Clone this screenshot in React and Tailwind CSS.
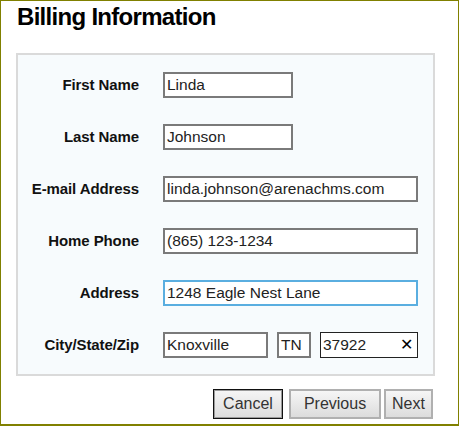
export default function App() {
  const font = { fontFamily: '"Liberation Sans", Arial, sans-serif' };
  const Label = ({ children }) => (
    <div className="w-[121px] shrink-0 text-right text-[15px] font-bold tracking-[-0.1px] text-[#111]">{children}</div>
  );
  const Field = ({ w, children, cls = "border-[#7a7a7a]" }) => (
    <div
      className={`h-[26px] ${w} border-2 ${cls} bg-white flex items-center pl-[2px] text-[15.5px] text-[#222] overflow-hidden whitespace-nowrap`}
    >
      {children}
    </div>
  );
  const Row = ({ label, children }) => (
    <div className="flex items-center h-[26px]">
      <Label>{label}</Label>
      <div className="ml-[24px] flex items-center">{children}</div>
    </div>
  );
  return (
    <div style={font} className="w-[459px] h-[426px] bg-white">
      <div className="w-[459px] h-[426px] border-l border-t border-r border-b-2 border-[#808000] flex flex-col">
        <div className="pl-[16px] pt-[2px] h-[52px] text-[24px] leading-[28px] font-bold tracking-[-0.7px] text-black">
          Billing Information
        </div>
        <div className="ml-[15px] w-[419px] border-2 border-[#dadada] bg-[#f7fbfd] pt-[17px] pb-[16px] flex flex-col gap-[26px]">
          <Row label="First Name"><Field w="w-[130px]">Linda</Field></Row>
          <Row label="Last Name"><Field w="w-[130px]">Johnson</Field></Row>
          <Row label="E-mail Address"><Field w="w-[255px]">linda.johnson@arenachms.com</Field></Row>
          <Row label="Home Phone"><Field w="w-[255px]">(865) 123-1234</Field></Row>
          <Row label="Address"><Field w="w-[255px]" cls="border-[#5aaee0]">1248 Eagle Nest Lane</Field></Row>
          <Row label="City/State/Zip">
            <Field w="w-[105px]">Knoxville</Field>
            <div className="ml-[9px]"><Field w="w-[34px]">TN</Field></div>
            <div className="ml-[9px]">
              <div className="h-[26px] w-[98px] border border-[#222] bg-white flex items-center pl-[2px] pr-[4px] text-[15.5px] text-[#222] justify-between">
                <span>37922</span>
                <span className="text-[16px] text-black">✕</span>
              </div>
            </div>
          </Row>
        </div>
        <div className="ml-[15px] w-[419px] pr-[2px] mt-[13px] flex justify-end text-[16px] text-[#333]">
          <div className="h-[30px] w-[70px] border border-[#111] shadow-[inset_0_0_0_1px_#9a9a9a] bg-gradient-to-b from-[#f6f6f6] to-[#dcdcdc] flex items-center justify-center">Cancel</div>
          <div className="ml-[6px] h-[30px] w-[92px] border-2 border-[#b0b0b0] bg-gradient-to-b from-[#f6f6f6] to-[#dcdcdc] flex items-center justify-center">Previous</div>
          <div className="ml-[3px] h-[30px] w-[49px] border-2 border-[#b0b0b0] bg-gradient-to-b from-[#f6f6f6] to-[#dcdcdc] flex items-center justify-center">Next</div>
        </div>
      </div>
    </div>
  );
}
